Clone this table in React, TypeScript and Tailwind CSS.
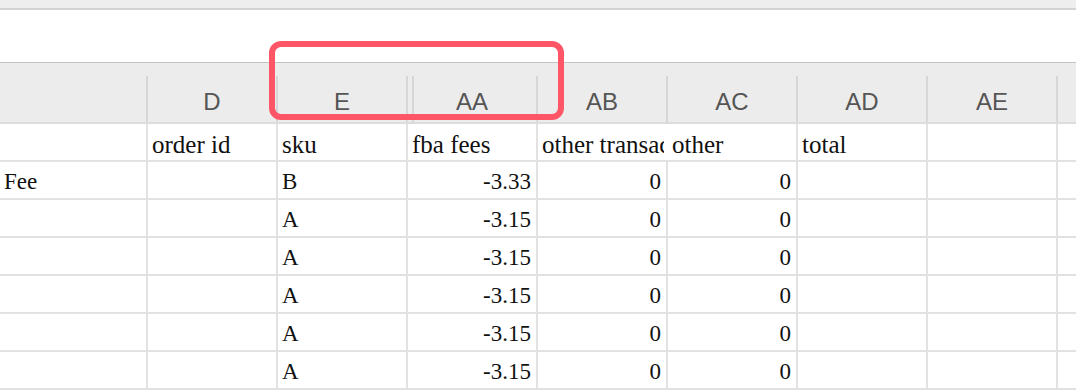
import React from "react";

const cols = ["D", "E", "AA", "AB", "AC", "AD", "AE"];

type Cell = { text: string; num?: boolean };

const labels = ["", "order id", "sku", "fba fees", "other transactions", "other", "total", "", ""];

const rows: Cell[][] = [
    [{ text: "Fee" }, { text: "" }, { text: "B" }, { text: "-3.33", num: true }, { text: "0", num: true }, { text: "0", num: true }, { text: "" }, { text: "" }, { text: "" }],
    ...Array.from({ length: 5 }, () => [
        { text: "" },
        { text: "" },
        { text: "A" },
        { text: "-3.15", num: true },
        { text: "0", num: true },
        { text: "0", num: true },
        { text: "" },
        { text: "" },
        { text: "" },
    ]),
];

function widthFor(i: number) {
    if (i === 0) return "w-[146px]";
    if (i === 8) return "flex-1";
    return "w-[130px]";
}

function HeaderRow() {
    return (
        <div className="flex h-[61px] bg-[#ececec] border-b-2 border-[#dcdcdc]">
            <div className="w-[146px]" />
            {cols.map((c) => (
                <div key={c} className="flex h-full w-[130px] items-end">
                    <div className="flex h-[46px] w-full border-l-2 border-[#d6d6d6]">
                        {c === "AA" && <div className="ml-[4px] h-full border-l-2 border-[#d6d6d6]" />}
                        <div className={`flex flex-1 items-center justify-center pt-[5px] text-[24px] text-[#555] ${c === "AA" ? "-ml-[6px]" : ""}`}>
                            {c}
                        </div>
                    </div>
                </div>
            ))}
            <div className="flex h-full flex-1 items-end">
                <div className="h-[46px] w-full border-l-2 border-[#d6d6d6]" />
            </div>
        </div>
    );
}

export default function App() {
    return (
        <div className="relative h-[392px] w-[1076px] overflow-hidden bg-white font-['Liberation_Sans',sans-serif]">
            {/* toolbar edge */}
            <div className="h-[8px] bg-[#eeeeee]" />
            <div className="h-[2px] bg-[#d3d3d3]" />
            {/* formula bar area */}
            <div className="h-[52px] bg-white" />
            <div className="h-[1px] bg-[#c3c3c3]" />

            <HeaderRow />

            <div className="font-['Liberation_Serif',serif] text-[#111]">
                <div className="flex h-[38px] border-b-2 border-[#e2e2e2] text-[25px]">
                    {labels.map((t, i) => (
                        <div
                            key={i}
                            className={`${widthFor(i)} flex items-center whitespace-nowrap pl-[4px] pt-[5px] ${i > 0 && i !== 5 ? "border-l-2 border-[#e2e2e2]" : ""} ${i === 5 ? "border-l-2 border-transparent" : ""}`}
                        >
                            {i === 4 ? <div className="w-[122px] overflow-hidden">{t}</div> : t}
                        </div>
                    ))}
                </div>

                {rows.map((r, ri) => (
                    <div key={ri} className="flex h-[38px] border-b-2 border-[#e2e2e2] text-[23px]">
                        {r.map((c, i) => (
                            <div
                                key={i}
                                className={`${widthFor(i)} flex items-center whitespace-nowrap pt-[5px] ${i > 0 ? "border-l-2 border-[#e2e2e2]" : ""} ${c.num ? "justify-end pr-[5px]" : "pl-[4px]"}`}
                            >
                                {c.text}
                            </div>
                        ))}
                    </div>
                ))}
            </div>

            {/* highlight around the hidden-column boundary */}
            <div className="absolute left-[269px] top-[41px] h-[79px] w-[295px] rounded-[12px] border-[6px] border-[#ff5667]" />
        </div>
    );
}
